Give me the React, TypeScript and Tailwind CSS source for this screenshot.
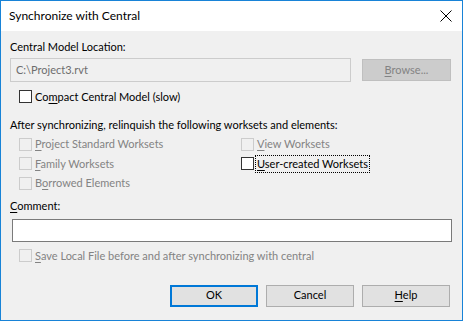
import React from 'react';

const font = { fontFamily: '"Segoe UI", Lato, "Noto Sans", sans-serif' };

// underline the access key letter like a Win32 mnemonic
const Mn = ({ text, at }: { text: string; at: number }) => (
  <span>
    {text.slice(0, at)}
    <span className="underline underline-offset-[2px]">{text[at]}</span>
    {text.slice(at + 1)}
  </span>
);

const Check = ({ label, at, disabled, focused }: { label: string; at: number; disabled?: boolean; focused?: boolean }) => (
  <div className="flex items-center h-[19.5px]">
    <div
      className={`w-[13px] h-[13px] border ${disabled ? 'border-[#cccccc] bg-[#f0f0f0]' : 'border-[#333333] bg-white'}`}
    />
    <div
      className={`ml-[2px] px-[1px] leading-[16px] ${disabled ? 'text-[#838383]' : 'text-black'} ${focused ? 'outline outline-1 outline-dotted outline-black' : ''}`}
    >
      <Mn text={label} at={at} />
    </div>
  </div>
);

export default function App() {
  return (
    <div className="w-[463px] h-[321px] border border-[#1883d7] bg-[#f0f0f0] flex flex-col text-[11px] text-black" style={font}>
      <div className="h-[30px] bg-white flex items-center justify-between pl-[8px] pr-[10px]">
        <span className="text-[12px] leading-[16px]">Synchronize with Central</span>
        <svg width="12" height="12" viewBox="0 0 12 12">
          <path d="M0.5 0.5 L11.5 11.5 M11.5 0.5 L0.5 11.5" stroke="#000" strokeWidth="1" />
        </svg>
      </div>

      <div className="flex flex-col px-[9px]">
        <div className="mt-[8px] leading-[16px]">Central Model Location:</div>
        <div className="mt-[3px] flex items-center">
          <div className="w-[341px] h-[24px] border border-[#cccccc] bg-[#f0f0f0] flex items-center pl-[5px] text-[#6d6d6d]">
            C:\Project3.rvt
          </div>
          <div className="ml-[11px] w-[89px] h-[22px] border border-[#bfbfbf] bg-[#cccccc] flex items-center justify-center text-[#838383]">
            <Mn text="Browse..." at={0} />
          </div>
        </div>

        <div className="mt-[5px] pl-[9px]">
          <Check label="Compact Central Model (slow)" at={2} />
        </div>

        <div className="mt-[10px] leading-[16px]">After synchronizing, relinquish the following worksets and elements:</div>

        <div className="mt-[2px] pl-[9px] grid grid-cols-[222px_1fr]">
          <div className="flex flex-col">
            <Check label="Project Standard Worksets" at={0} disabled />
            <Check label="Family Worksets" at={0} disabled />
            <Check label="Borrowed Elements" at={1} disabled />
          </div>
          <div className="flex flex-col">
            <Check label="View Worksets" at={0} disabled />
            <Check label="User-created Worksets" at={0} focused />
          </div>
        </div>

        <div className="mt-[5px] leading-[16px]">
          <Mn text="Comment:" at={0} />
        </div>
        <div className="mt-[5px] ml-[2px] w-[440px] h-[23px] border border-[#7a7a7a] bg-white" />

        <div className="mt-[4px] pl-[9px]">
          <Check label="Save Local File before and after synchronizing with central" at={0} disabled />
        </div>

        <div className="mt-[19px] flex justify-end gap-[8px] pr-[3px]">
          <div className="w-[88px] h-[22px] border-2 border-[#0078d7] bg-[#e1e1e1] flex items-center justify-center">OK</div>
          <div className="w-[88px] h-[22px] border border-[#adadad] bg-[#e1e1e1] flex items-center justify-center">Cancel</div>
          <div className="w-[88px] h-[22px] border border-[#adadad] bg-[#e1e1e1] flex items-center justify-center">
            <Mn text="Help" at={0} />
          </div>
        </div>
      </div>
    </div>
  );
}
